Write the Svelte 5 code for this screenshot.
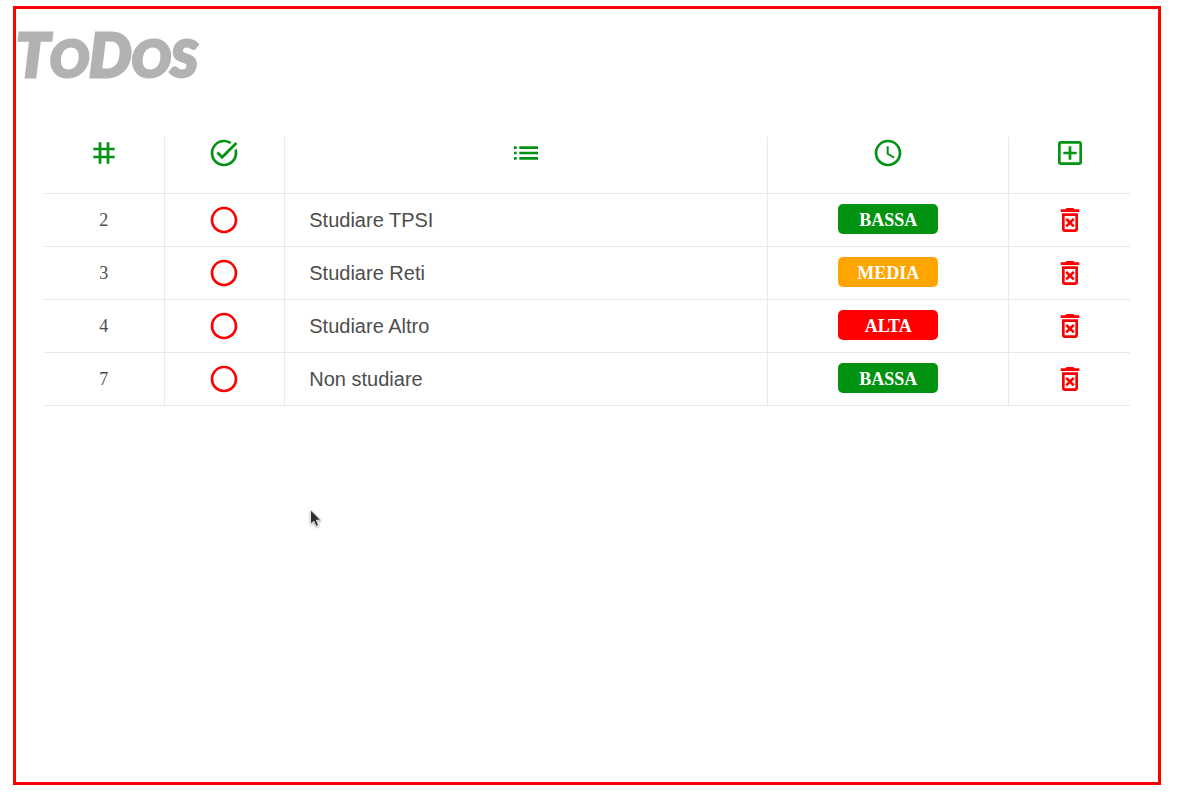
<script>
  let todos = $state([
    { id: 2, text: 'Studiare TPSI', priority: 'bassa', done: false },
    { id: 3, text: 'Studiare Reti', priority: 'media', done: false },
    { id: 4, text: 'Studiare Altro', priority: 'alta', done: false },
    { id: 7, text: 'Non studiare', priority: 'bassa', done: false }
  ]);

  const levels = ['bassa', 'media', 'alta'];

  function remove(id) {
    todos = todos.filter((t) => t.id !== id);
  }

  function add() {
    const id = Math.max(0, ...todos.map((t) => t.id)) + 1;
    todos.push({ id, text: 'Studiare', priority: 'bassa', done: false });
  }

  function cycle(todo) {
    todo.priority = levels[(levels.indexOf(todo.priority) + 1) % levels.length];
  }
</script>

{#snippet icon(d)}
  <svg class="icon" viewBox="0 0 24 24" aria-hidden="true"><path {d} /></svg>
{/snippet}

<div class="page">
  <main>
    <h1>T<span>o</span>D<span>os</span></h1>

    <div class="list">
      <table>
        <colgroup>
          <col class="one" /><col class="one" /><col class="four" /><col class="two" /><col class="one" />
        </colgroup>
        <thead>
          <tr>
            <th scope="col" aria-label="Numero">
              {@render icon('M20 10V8h-4V4h-2v4h-4V4H8v4H4v2h4v4H4v2h4v4h2v-4h4v4h2v-4h4v-2h-4v-4h4zm-6 4h-4v-4h4v4z')}
            </th>
            <th scope="col" aria-label="Completato">
              {@render icon('M22 5.18 10.59 16.6l-4.24-4.24 1.41-1.41 2.83 2.83 10-10L22 5.18zM19.79 10.22c.13.57.21 1.17.21 1.78 0 4.42-3.58 8-8 8s-8-3.58-8-8 3.58-8 8-8c1.58 0 3.04.46 4.28 1.25l1.44-1.44C16.1 2.67 14.13 2 12 2 6.48 2 2 6.48 2 12s4.48 10 10 10 10-4.48 10-10c0-1.19-.22-2.33-.6-3.39l-1.61 1.61z')}
            </th>
            <th scope="col" aria-label="Testo">
              {@render icon('M3 13h2v-2H3v2zm0 4h2v-2H3v2zm0-8h2V7H3v2zm4 4h14v-2H7v2zm0 4h14v-2H7v2zM7 7v2h14V7H7z')}
            </th>
            <th scope="col" aria-label="Urgenza">
              {@render icon('M11.99 2C6.47 2 2 6.48 2 12s4.47 10 9.99 10C17.52 22 22 17.52 22 12S17.52 2 11.99 2zM12 20c-4.42 0-8-3.58-8-8s3.58-8 8-8 8 3.58 8 8-3.58 8-8 8zm.5-13H11v6l5.25 3.15.75-1.23-4.5-2.67z')}
            </th>
            <th scope="col">
              <button class="add" aria-label="Aggiungi" onclick={add}>
                {@render icon('M19 3H5c-1.11 0-2 .9-2 2v14c0 1.1.89 2 2 2h14c1.1 0 2-.9 2-2V5c0-1.1-.9-2-2-2zm0 16H5V5h14v14zm-8-2h2v-4h4v-2h-4V7h-2v4H7v2h4z')}
              </button>
            </th>
          </tr>
        </thead>
        <tbody>
          {#each todos as todo (todo.id)}
            <tr>
              <td class="num">{todo.id}</td>
              <td>
                <button
                  class:done={todo.done}
                  aria-label="Completa"
                  aria-pressed={todo.done}
                  onclick={() => (todo.done = !todo.done)}
                >
                  {@render icon('M12 2C6.48 2 2 6.48 2 12s4.48 10 10 10 10-4.48 10-10S17.52 2 12 2zm0 18c-4.42 0-8-3.58-8-8s3.58-8 8-8 8 3.58 8 8-3.58 8-8 8z')}
                </button>
              </td>
              <td class="text">{todo.text}</td>
              <td>
                <button class="badge {todo.priority}" onclick={() => cycle(todo)}>
                  {todo.priority.toUpperCase()}
                </button>
              </td>
              <td>
                <button aria-label="Elimina" onclick={() => remove(todo.id)}>
                  {@render icon('M14.12 10.47 12 12.59l-2.13-2.12-1.41 1.41L10.59 14l-2.12 2.12 1.41 1.41L12 15.41l2.12 2.12 1.41-1.41L13.41 14l2.12-2.12zM15.5 4l-1-1h-5l-1 1H5v2h14V4zM6 19c0 1.1.9 2 2 2h8c1.1 0 2-.9 2-2V7H6v12zM8 9h8v10H8V9z')}
                </button>
              </td>
            </tr>
          {/each}
        </tbody>
      </table>
    </div>
  </main>

  <svg class="pointer" viewBox="0 0 12 19" aria-hidden="true">
    <path d="M.5 .8V15.2L3.8 12.2L6 17.4L8.6 16.3L6.4 11.2H10.8Z" />
  </svg>
</div>

<style>
  :global(body) {
    background: #fff;
  }

  .page {
    box-sizing: border-box;
    min-height: 100vh;
    padding: 6px 39px 15px 13px;
    display: flex;
    position: relative;
  }

  main {
    flex: 1;
    min-width: 0;
    border: 3px solid red;
  }

  h1 {
    margin: 0;
    padding: 13px 0 15px;
    color: #b2b2b2;
    font: italic 900 60px/64px 'Permanent Marker', Lato, sans-serif;
    -webkit-text-stroke: 3px #b2b2b2;
    stroke-linejoin: round;
  }

  h1 span {
    font-size: 52px;
    text-transform: uppercase;
  }

  .list {
    padding: 33px 28px;
  }

  table {
    width: 100%;
    table-layout: fixed;
    border-collapse: separate;
    border-spacing: 0;
    color: #4d4d4d;
  }

  .one {
    width: 11.11%;
  }

  .two {
    width: 22.22%;
  }

  .four {
    width: 44.45%;
  }

  th,
  td {
    box-sizing: border-box;
    height: 53px;
    padding: 0;
    border-right: 1px solid #e6eaed;
    border-bottom: 1px solid #e6eaed;
    text-align: center;
    vertical-align: middle;
  }

  th {
    height: 57px;
    vertical-align: top;
    color: #009210;
  }

  th:last-child,
  td:last-child {
    border-right: 0;
  }

  .num {
    font: 18px/24px 'Liberation Serif', serif;
  }

  .text {
    padding: 0 24px;
    font: 20px/24px 'Liberation Sans', sans-serif;
    text-align: left;
  }

  .icon {
    display: block;
    width: 32px;
    height: 32px;
    margin: 0 auto;
    fill: currentColor;
  }

  button {
    display: block;
    margin: 0 auto;
    padding: 0;
    border: 0;
    background: none;
    color: red;
    cursor: pointer;
  }

  button.add,
  button.done {
    color: #009210;
  }

  button.badge {
    width: 100px;
    height: 30px;
    margin-bottom: 2px;
    padding-top: 2px;
    border-radius: 5px;
    color: #fff;
    font: bold 18px/28px 'Liberation Serif', serif;
  }

  .badge.bassa {
    background: #009210;
  }

  .badge.media {
    background: orange;
  }

  .badge.alta {
    background: red;
  }

  .pointer {
    position: absolute;
    left: 310px;
    top: 509px;
    width: 12px;
    height: 19px;
    fill: #2e2e2e;
    stroke: #e8e8e8;
    stroke-width: 1;
    filter: drop-shadow(0 1px 1px rgb(0 0 0 / 30%));
    pointer-events: none;
  }
</style>
